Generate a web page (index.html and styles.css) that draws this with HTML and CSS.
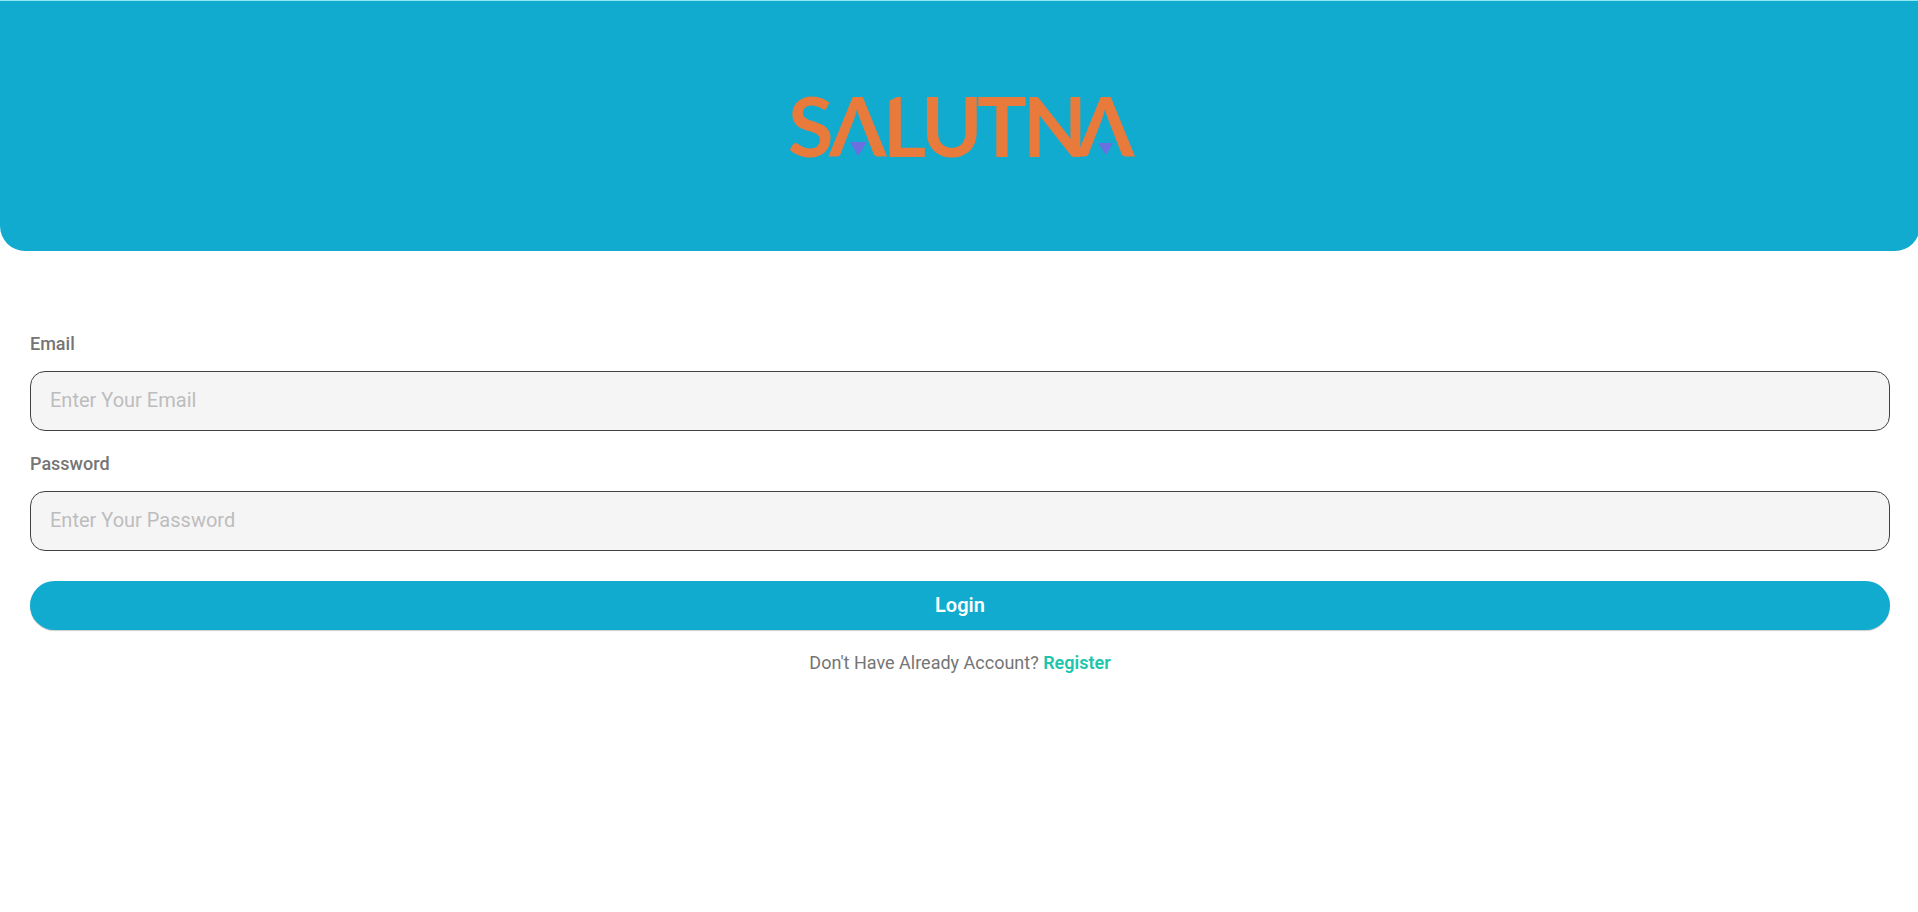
FILE: index.html
```html
<!DOCTYPE html>
<html lang="en">
<head>
<meta charset="utf-8">
<meta name="viewport" content="width=device-width, initial-scale=1">
<title>Salutna – Login</title>
<link rel="stylesheet" href="styles.css">
</head>
<body>
<header class="hero">
  <svg class="logo" viewBox="0 0 360 112" role="img" aria-label="Salutna">
    <text class="logo-text" y="93" x="8 49 103 141 197 243 297">SΛLUTNΛ</text>
    <path class="logo-cut" d="M106 31H121L107 38Z"/>
    <path class="logo-mark" d="M70 78H87L78 92ZM318 79H333L326 91Z"/>
  </svg>
</header>
<main>
  <form class="form">
    <div class="field">
      <label class="label" for="email">Email</label>
      <input class="input" id="email" type="email" placeholder="Enter Your Email">
    </div>
    <div class="field">
      <label class="label" for="password">Password</label>
      <input class="input" id="password" type="password" placeholder="Enter Your Password">
    </div>
    <button class="submit" type="submit">Login</button>
    <p class="hint">Don't Have Already Account? <a class="link" href="#register">Register</a></p>
  </form>
</main>
</body>
</html>
```
FILE: styles.css
```css
* {
  box-sizing: border-box;
}

body {
  margin: 0;
  background: #fff;
  color: #757575;
  font-family: Roboto, "Liberation Sans", sans-serif;
  font-size: 18px;
  line-height: 24px;
  overflow-x: hidden;
}

.hero {
  display: flex;
  align-items: center;
  justify-content: center;
  margin-right: -2px;
  padding: 64px 24px 75px;
  border-radius: 0 0 25px 25px;
  background: #10abcf;
  box-shadow: inset 0 1px #8fe8f4;
}

.logo {
  display: block;
  width: 360px;
  max-width: 100%;
  overflow: visible;
}

.logo-text {
  fill: #e87a3c;
  font-family: Lato, sans-serif;
  font-size: 83px;
  font-weight: 700;
}

.logo-cut {
  fill: #10abcf;
}

.logo-mark {
  fill: #6b70e0;
}

.form {
  display: flex;
  flex-direction: column;
  padding: 81px 28px 24px 30px;
}

.field {
  display: flex;
  flex-direction: column;
  gap: 15px;
  margin-bottom: 21px;
}

.label {
  font-weight: 500;
}

.input {
  width: 100%;
  height: 60px;
  padding: 0 19px 2px;
  border: 1px solid #424247;
  border-radius: 15px;
  background: #f5f5f5;
  color: #424247;
  font: inherit;
  font-size: 20px;
}

.input::placeholder {
  color: #bdbdbd;
  opacity: 1;
}

.submit {
  height: 49px;
  margin-top: 9px;
  padding: 0 24px 2px;
  border: 0;
  border-radius: 25px;
  background: #10abcf;
  box-shadow: 0 1px 1px rgba(0, 0, 0, 0.2);
  color: #fff;
  font: inherit;
  font-size: 20px;
  font-weight: 600;
}

.hint {
  margin: 21px 0 0;
  text-align: center;
}

.link {
  color: #1cc5ab;
  font-weight: 600;
  text-decoration: none;
}
```
